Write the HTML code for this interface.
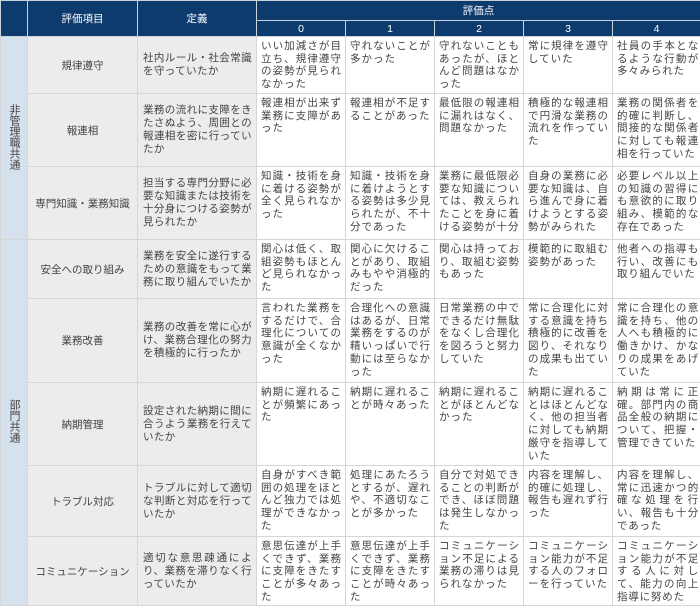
<!DOCTYPE html>
<html><head><meta charset="utf-8"><style>
html,body{margin:0;padding:0;background:#fff;width:700px;height:611px;overflow:hidden}
table{border-collapse:collapse;table-layout:fixed;width:700px;font-family:"Liberation Sans","Noto Sans CJK JP",sans-serif;color:#444}
td,th{border:1px solid #d6d6d6;padding:0;overflow:hidden}
th{background:#0d3b6e;color:#fff;font-weight:normal;font-size:10.5px;border-color:#c8d2de;text-align:center}
td.g{background:#d6e1ee;text-align:center;vertical-align:middle;font-size:11px}
td.g span{writing-mode:vertical-rl;letter-spacing:0px}
td.n{background:#ececec;text-align:center;vertical-align:middle;font-size:10.5px}
td.d{background:#ececec;vertical-align:middle;font-size:10.5px;letter-spacing:.4px;line-height:13px;padding:0 4px 0 5px;text-align:justify}
td.s{vertical-align:top;background:#fff}
td.s div{font-size:10.5px;letter-spacing:1px;line-height:12.7px;padding:3px 3px 0 4px;text-align:justify;overflow:hidden}
td.s:last-child div{letter-spacing:.8px;padding:3px 1px 0 4px}
</style></head><body>
<table>
<colgroup><col style="width:27px"><col style="width:110px"><col style="width:119px"><col style="width:89px"><col style="width:89px"><col style="width:89px"><col style="width:89px"><col style="width:88px"></colgroup>
<tr style="height:20px"><th rowspan="2"></th><th rowspan="2">評価項目</th><th rowspan="2">定義</th><th colspan="5">評価点</th></tr>
<tr style="height:16px"><th>0</th><th>1</th><th>2</th><th>3</th><th>4</th></tr>
<tr style="height:57px"><td class="g" rowspan="3"><span>非管理職共通</span></td><td class="n">規律遵守</td><td class="d">社内ルール・社会常識を守っていたか</td>
<td class="s"><div style="height:51px">いい加減さが目立ち、規律遵守の姿勢が見られなかった</div></td><td class="s"><div style="height:51px">守れないことが多かった</div></td><td class="s"><div style="height:51px">守れないこともあったが、ほとんど問題はなかった</div></td><td class="s"><div style="height:51px">常に規律を遵守していた</div></td><td class="s"><div style="height:51px">社員の手本となるような行動が多々みられた</div></td></tr>
<tr style="height:73px"><td class="n">報連相</td><td class="d">業務の流れに支障をきたさぬよう、周囲との報連相を密に行っていたか</td>
<td class="s"><div style="height:67px">報連相が出来ず業務に支障があった</div></td><td class="s"><div style="height:67px">報連相が不足することがあった</div></td><td class="s"><div style="height:67px">最低限の報連相に漏れはなく、問題なかった</div></td><td class="s"><div style="height:67px">積極的な報連相で円滑な業務の流れを作っていた</div></td><td class="s"><div style="height:67px">業務の関係者を的確に判断し、間接的な関係者に対しても報連相を行っていた</div></td></tr>
<tr style="height:73px"><td class="n">専門知識・業務知識</td><td class="d">担当する専門分野に必要な知識または技術を十分身につける姿勢が見られたか</td>
<td class="s"><div style="height:67px">知識・技術を身に着ける姿勢が全く見られなかった</div></td><td class="s"><div style="height:67px">知識・技術を身に着けようとする姿勢は多少見られたが、不十分であった</div></td><td class="s"><div style="height:67px">業務に最低限必要な知識については、教えられたことを身に着ける姿勢が十分</div></td><td class="s"><div style="height:67px">自身の業務に必要な知識は、自ら進んで身に着けようとする姿勢がみられた</div></td><td class="s"><div style="height:67px">必要レベル以上の知識の習得にも意欲的に取り組み、模範的な存在であった</div></td></tr>
<tr style="height:59px"><td class="g" rowspan="5"><span>部門共通</span></td><td class="n">安全への取り組み</td><td class="d">業務を安全に遂行するための意識をもって業務に取り組んでいたか</td>
<td class="s"><div style="height:53px">関心は低く、取組姿勢もほとんど見られなかった</div></td><td class="s"><div style="height:53px">関心に欠けることがあり、取組みもやや消極的だった</div></td><td class="s"><div style="height:53px">関心は持っており、取組む姿勢もあった</div></td><td class="s"><div style="height:53px">模範的に取組む姿勢があった</div></td><td class="s"><div style="height:53px">他者への指導も行い、改善にも取り組んでいた</div></td></tr>
<tr style="height:84px"><td class="n">業務改善</td><td class="d">業務の改善を常に心がけ、業務合理化の努力を積極的に行ったか</td>
<td class="s"><div style="height:78px">言われた業務をするだけで、合理化についての意識が全くなかった</div></td><td class="s"><div style="height:78px">合理化への意識はあるが、日常業務をするのが精いっぱいで行動には至らなかった</div></td><td class="s"><div style="height:78px">日常業務の中でできるだけ無駄をなくし合理化を図ろうと努力していた</div></td><td class="s"><div style="height:78px">常に合理化に対する意識を持ち積極的に改善を図り、それなりの成果も出ていた</div></td><td class="s"><div style="height:78px">常に合理化の意識を持ち、他の人へも積極的に働きかけ、かなりの成果をあげていた</div></td></tr>
<tr style="height:83px"><td class="n">納期管理</td><td class="d">設定された納期に間に合うよう業務を行えていたか</td>
<td class="s"><div style="height:77px">納期に遅れることが頻繁にあった</div></td><td class="s"><div style="height:77px">納期に遅れることが時々あった</div></td><td class="s"><div style="height:77px">納期に遅れることがほとんどなかった</div></td><td class="s"><div style="height:77px">納期に遅れることはほとんどなく、他の担当者に対しても納期厳守を指導していた</div></td><td class="s"><div style="height:77px">納期は常に正確。部門内の商品全般の納期について、把握・管理できていた</div></td></tr>
<tr style="height:71px"><td class="n">トラブル対応</td><td class="d">トラブルに対して適切な判断と対応を行っていたか</td>
<td class="s"><div style="height:65px">自身がすべき範囲の処理をほとんど独力では処理ができなかった</div></td><td class="s"><div style="height:65px">処理にあたろうとするが、遅れや、不適切なことが多かった</div></td><td class="s"><div style="height:65px">自分で対処できることの判断ができ、ほぼ問題は発生しなかった</div></td><td class="s"><div style="height:65px">内容を理解し、的確に処理し、報告も遅れず行った</div></td><td class="s"><div style="height:65px">内容を理解し、常に迅速かつ的確な処理を行い、報告も十分であった</div></td></tr>
<tr style="height:69px"><td class="n">コミュニケーション</td><td class="d">適切な意思疎通により、業務を滞りなく行っていたか</td>
<td class="s"><div style="height:64px">意思伝達が上手くできず、業務に支障をきたすことが多々あった</div></td><td class="s"><div style="height:64px">意思伝達が上手くできず、業務に支障をきたすことが時々あった</div></td><td class="s"><div style="height:64px">コミュニケーション不足による業務の滞りは見られなかった</div></td><td class="s"><div style="height:64px">コミュニケーション能力が不足する人のフォローを行っていた</div></td><td class="s"><div style="height:64px">コミュニケーション能力が不足する人に対して、能力の向上指導に努めた</div></td></tr>
</table>
</body></html>
